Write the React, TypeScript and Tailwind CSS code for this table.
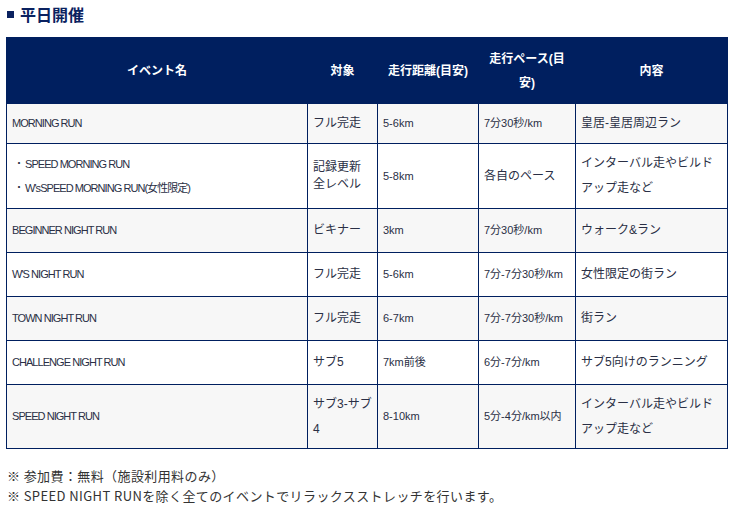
const rows = [
  { name: ['MORNING RUN'], target: 'フル完走', dist: '5-6km', pace: '7分30秒/km', content: '皇居-皇居周辺ラン', h: 'h-[40px]' },
  {
    name: ['SPEED MORNING RUN', "W'sSPEED MORNING RUN(女性限定)"],
    target: '記録更新\n全レベル',
    dist: '5-8km',
    pace: '各自のペース',
    content: 'インターバル走やビルドアップ走など',
    h: 'h-[65px]',
  },
  { name: ['BEGINNER NIGHT RUN'], target: 'ビキナー', dist: '3km', pace: '7分30秒/km', content: 'ウォーク&ラン', h: 'h-[44px]' },
  { name: ["W'S NIGHT RUN"], target: 'フル完走', dist: '5-6km', pace: '7分-7分30秒/km', content: '女性限定の街ラン', h: 'h-[44px]' },
  { name: ['TOWN NIGHT RUN'], target: 'フル完走', dist: '6-7km', pace: '7分-7分30秒/km', content: '街ラン', h: 'h-[44px]' },
  { name: ['CHALLENGE NIGHT RUN'], target: 'サブ5', dist: '7km前後', pace: '6分-7分/km', content: 'サブ5向けのランニング', h: 'h-[44px]' },
  { name: ['SPEED NIGHT RUN'], target: 'サブ3-サブ\n4', dist: '8-10km', pace: '5分-4分/km以内', content: 'インターバル走やビルドアップ走など', h: 'h-[64px]' },
];

const cell = 'border border-[#001f5f] pl-[5px] pr-[6px] align-middle';

export default function App() {
  return (
    <div className="min-h-[513px] w-[731px] bg-white pt-[3px] font-['Liberation_Sans','Noto_Sans_CJK_JP',sans-serif] text-[#2a2f45]">
      <h2 className="flex h-[22px] items-center pl-[7px] text-[16px] font-bold text-[#0b2260]">
        <span className="mr-[6px] h-[7px] w-[7px] bg-[#0b2260]" />
        <span className="font-['Noto_Sans_CJK_JP',sans-serif] leading-none">平日開催</span>
      </h2>

      <table className="ml-[6px] mt-[12px] w-[721px] table-fixed border-collapse">
        <colgroup>
          <col className="w-[301px]" />
          <col className="w-[70px]" />
          <col className="w-[101px]" />
          <col className="w-[97px]" />
          <col className="w-[152px]" />
        </colgroup>
        <thead>
          <tr className="h-[66px] bg-[#001f5f] text-[12px] font-bold leading-[24px] text-white">
            <th className="border border-[#001f5f] px-[8px]">イベント名</th>
            <th className="border border-[#001f5f] px-[8px]">対象</th>
            <th className="border border-[#001f5f] px-[8px]">走行距離(目安)</th>
            <th className="border border-[#001f5f] px-[8px]">走行ペース(目安)</th>
            <th className="border border-[#001f5f] px-[8px]">内容</th>
          </tr>
        </thead>
        <tbody className="text-[12px] leading-[25px]">
          {rows.map((r, i) => (
            <tr key={i} className={`${r.h} ${i % 2 === 0 ? 'bg-[#f7f7f7]' : 'bg-white'}`}>
              <td className={`${cell} text-[11px] tracking-[-0.95px]`}>
                {r.name.length > 1 ? (
                  <ul className="leading-[24px]">
                    {r.name.map((n) => (
                      <li key={n} className="flex">
                        <span className="w-[13px] pl-[2px] text-[10px]">・</span>
                        <span>{n}</span>
                      </li>
                    ))}
                  </ul>
                ) : (
                  r.name[0]
                )}
              </td>
              <td
                className={`border border-[#001f5f] pl-[5px] align-middle whitespace-pre ${
                  r.target === '記録更新\n全レベル' ? 'leading-[17px]' : ''
                }`}
              >
                {r.target}
              </td>
              <td className={`${cell} text-[11px]`}>{r.dist}</td>
              <td className={`${cell} ${r.pace.includes('km') ? 'text-[11px]' : ''}`}>{r.pace}</td>
              <td className={`${cell} pr-[10px]`}>{r.content}</td>
            </tr>
          ))}
        </tbody>
      </table>

      <div className="mt-[17px] pl-[7px] font-['Noto_Sans_CJK_JP',sans-serif] text-[13px] leading-[20px] tracking-[0.4px] text-[#333]">
        <p>※ 参加費：無料（施設利用料のみ）</p>
        <p>※ SPEED NIGHT RUNを除く全てのイベントでリラックスストレッチを行います。</p>
      </div>
    </div>
  );
}
